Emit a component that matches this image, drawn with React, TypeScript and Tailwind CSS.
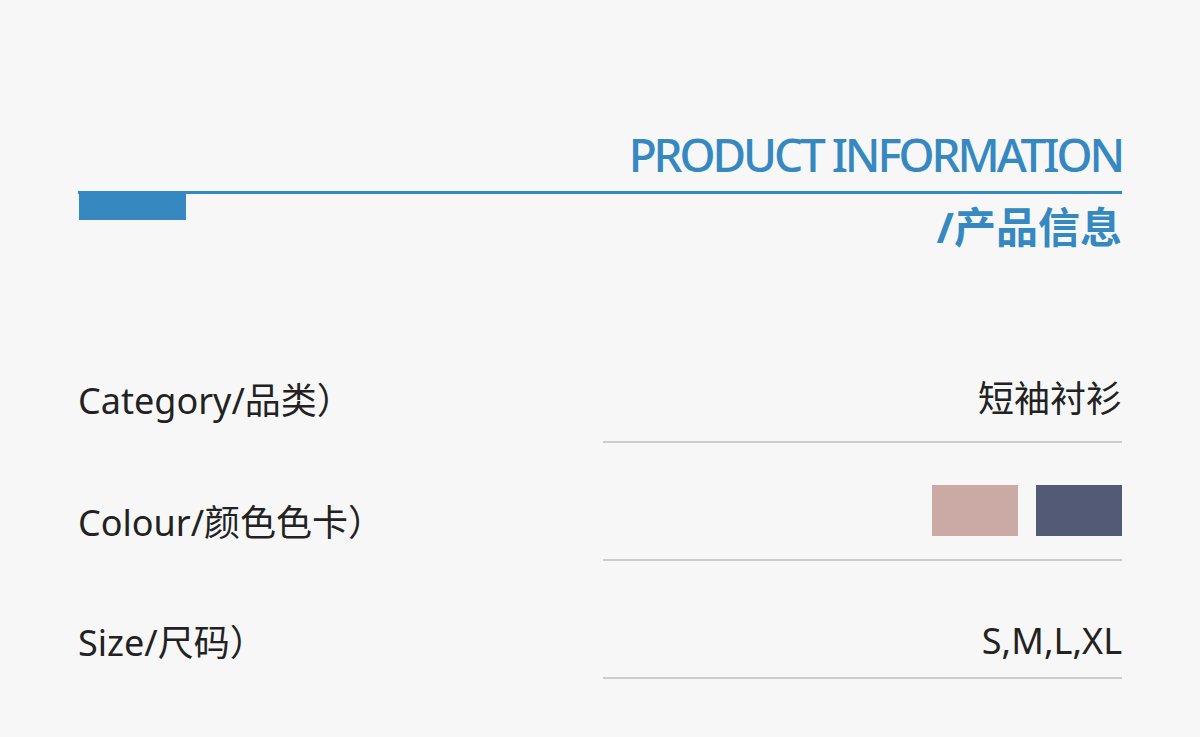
import React, { FC } from "react";

const font = { fontFamily: '"Noto Sans", "Noto Sans CJK SC", sans-serif' };

const Row: FC<{ label: string; children: React.ReactNode; pb: string }> = ({
  label,
  children,
  pb,
}) => (
  <div className="flex items-end justify-between">
    <div className={`text-[36px] leading-[43px] text-[#222] ${pb}`}>{label}</div>
    <div
      className={`flex w-[519px] justify-end border-b-2 border-[#cccccc] text-[36px] leading-[43px] text-[#222] ${pb}`}
    >
      {children}
    </div>
  </div>
);

const App: FC = () => {
  return (
    <div
      className="h-[737px] w-[1200px] overflow-hidden bg-[#f7f7f7] px-[78px] pt-[124px]"
      style={font}
    >
      {/* heading */}
      <div className="flex flex-col">
        <div className="text-right text-[46px] font-medium leading-[60px] tracking-[-3.1px] text-[#3588c0]">
          PRODUCT INFORMATION
        </div>
        <div className="relative mt-[7px] h-[3px] w-full bg-[#3588c0]">
          <div className="absolute left-[1px] top-0 h-[29px] w-[107px] bg-[#3588c0]" />
        </div>
        <div className="mt-[9px] text-right text-[42px] font-bold leading-[48px] text-[#3588c0]">
          /产品信息
        </div>
      </div>

      {/* rows */}
      <div className="mt-[126px] flex flex-col">
        <Row label="Category/品类）" pb="pb-[21px]">
          短袖衬衫
        </Row>
        <div className="mt-[42px] flex items-end justify-between">
          <div className="pb-[17px] text-[36px] leading-[43px] text-[#222]">
            Colour/颜色色卡）
          </div>
          <div className="flex w-[519px] justify-end gap-[18px] border-b-2 border-[#cccccc] pb-[23px]">
            <div className="h-[51px] w-[86px] bg-[#cba9a5]" />
            <div className="h-[51px] w-[86px] bg-[#525a75]" />
          </div>
        </div>
        <div className="mt-[58px]">
          <Row label="Size/尺码）" pb="pb-[15px]">
            S,M,L,XL
          </Row>
        </div>
      </div>
    </div>
  );
};

export default App;
